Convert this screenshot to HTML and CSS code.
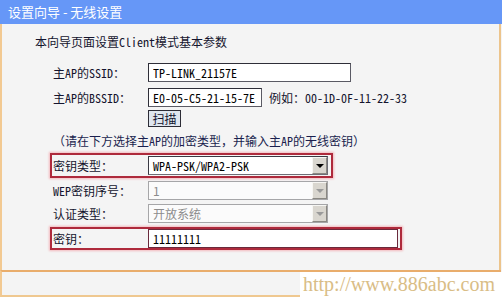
FILE: index.html
```html
<!DOCTYPE html>
<html lang="zh-CN">
<head>
  <meta charset="UTF-8">
  <title>设置向导 - 无线设置</title>
  <link rel="stylesheet" href="styles.css">
</head>
<body>

  <div class="frame">
    <div class="titlebar">设置向导 - 无线设置</div>

    <div class="panel">
      <p class="intro">本向导页面设置Client模式基本参数</p>

      <div class="row row-ssid">
        <span class="label">主AP的SSID：</span>
        <input class="text ssid" type="text" value="TP-LINK_21157E" readonly>
      </div>

      <div class="row row-bssid">
        <span class="label">主AP的BSSID：</span>
        <input class="text bssid" type="text" value="E0-05-C5-21-15-7E" readonly>
        <span class="hint">例如：00-1D-0F-11-22-33</span>
      </div>

      <div class="row row-scan">
        <button class="scan">扫描</button>
      </div>

      <p class="note">（请在下方选择主AP的加密类型，并输入主AP的无线密钥）</p>

      <div class="row marked marked-type">
        <span class="label">密钥类型：</span>
        <div class="select">
          <span class="value">WPA-PSK/WPA2-PSK</span>
          <span class="arrow"></span>
        </div>
      </div>

      <div class="row row-wep">
        <span class="label">WEP密钥序号：</span>
        <div class="select disabled">
          <span class="value">1</span>
          <span class="arrow"></span>
        </div>
      </div>

      <div class="row row-auth">
        <span class="label">认证类型：</span>
        <div class="select disabled">
          <span class="value">开放系统</span>
          <span class="arrow"></span>
        </div>
      </div>

      <div class="row marked marked-key">
        <span class="label">密钥：</span>
        <input class="text key" type="text" value="11111111" readonly>
      </div>
    </div>

    <div class="footer"></div>
    <div class="watermark">http://www.886abc.com</div>
  </div>

</body>
</html>
```

FILE: styles.css
```css
body {
  margin: 0;
  background: #ffffff;
  font-family: "Noto Sans Mono CJK SC", "Noto Sans CJK SC", monospace;
  font-size: 12px;
  color: #14142e;
}

.frame {
  position: relative;
  width: 502px;
  height: 297px;
  background: #f4f4f4;
}

.titlebar {
  height: 24px;
  line-height: 24px;
  padding-left: 8px;
  background: #6697f7;
  color: #ffffff;
  font-family: "Noto Sans CJK SC", sans-serif;
  font-size: 13px;
}

.panel {
  height: 246px;
  margin-right: 1px;
  border-left: 2px solid #f2c992;
  border-right: 2px solid #ecc48c;
  box-sizing: border-box;
  padding-top: 10px;
}

.intro {
  margin: 0 0 13px 33px;
  line-height: 16px;
}

.row {
  display: flex;
  align-items: center;
  height: 19px;
  padding-left: 51px;
}

.label {
  width: 95px;
  flex: none;
  line-height: 16px;
}

.row-bssid {
  margin-top: 6px;
}

.row-scan {
  margin-top: 3px;
  height: 17px;
  padding-left: 146px;
}

.row-wep {
  margin-top: 3px;
}

.row-auth {
  margin-top: 4px;
}

.text {
  box-sizing: border-box;
  height: 19px;
  margin: 0;
  padding: 0 4px;
  background: #ffffff;
  border: 1px solid #5a5a64;
  border-top-color: #2e2e38;
  border-left-color: #2e2e38;
  font-family: "Noto Sans Mono CJK SC", "Liberation Mono", monospace;
  font-size: 12px;
  color: #000000;
  outline: none;
}

.ssid {
  width: 203px;
}

.bssid {
  width: 114px;
}

.hint {
  margin-left: 7px;
}

.scan {
  box-sizing: border-box;
  width: 33px;
  height: 17px;
  padding: 0;
  background: #dfe6ef;
  border: 1px solid #2c2c36;
  font-family: "Noto Sans CJK SC", sans-serif;
  font-size: 12px;
  line-height: 15px;
  color: #14142e;
}

.note {
  margin: 6px 0 4px 51px;
  line-height: 16px;
  color: #1a1f4e;
}

.marked {
  display: inline-flex;
  height: auto;
  margin-left: 48px;
  padding: 1px 3px 1px 1px;
  border: 2px solid #ae2a3c;
  box-shadow: 0 0 2px 1px #f3b9bd;
}

.marked-key {
  margin-top: 4px;
  padding: 0 2px 0 1px;
}

.select {
  box-sizing: border-box;
  display: flex;
  align-items: center;
  width: 180px;
  height: 19px;
  padding-left: 4px;
  background: #ffffff;
  border: 1px solid #6e6e76;
  border-top-color: #3a3a44;
  border-left-color: #3a3a44;
  font-family: "Noto Sans Mono CJK SC", "Liberation Mono", monospace;
  color: #000000;
}

.select .value {
  flex: 1;
}

.select .arrow {
  position: relative;
  width: 15px;
  height: 17px;
  box-sizing: border-box;
  background: #d9d6cf;
  border: 1px solid #f6f6f3;
  border-right-color: #8a8882;
  border-bottom-color: #8a8882;
}

.select .arrow::after {
  content: "";
  position: absolute;
  left: 3px;
  top: 6px;
  border-left: 4px solid transparent;
  border-right: 4px solid transparent;
  border-top: 4px solid #000000;
}

.select.disabled {
  border-color: #a6a6a8;
  background: #fbfbfb;
  color: #8c8c8c;
  font-family: "Noto Sans CJK SC", sans-serif;
}

.select.disabled .arrow::after {
  border-top-color: #9a9a9a;
}

.key {
  width: 250px;
  border-color: #6a2a3c;
}

.footer {
  height: 23px;
  margin-right: 1px;
  border-top: 2px solid #e9ad6c;
  border-bottom: 2px solid #efc890;
  border-left: 2px solid #f2c992;
}

.watermark {
  position: absolute;
  left: 300px;
  top: 272px;
  width: 199px;
  height: 25px;
  padding-left: 3px;
  background: #ffffff;
  font-family: "Liberation Serif", serif;
  font-size: 20px;
  line-height: 25px;
  color: #d9bd86;
}
```
